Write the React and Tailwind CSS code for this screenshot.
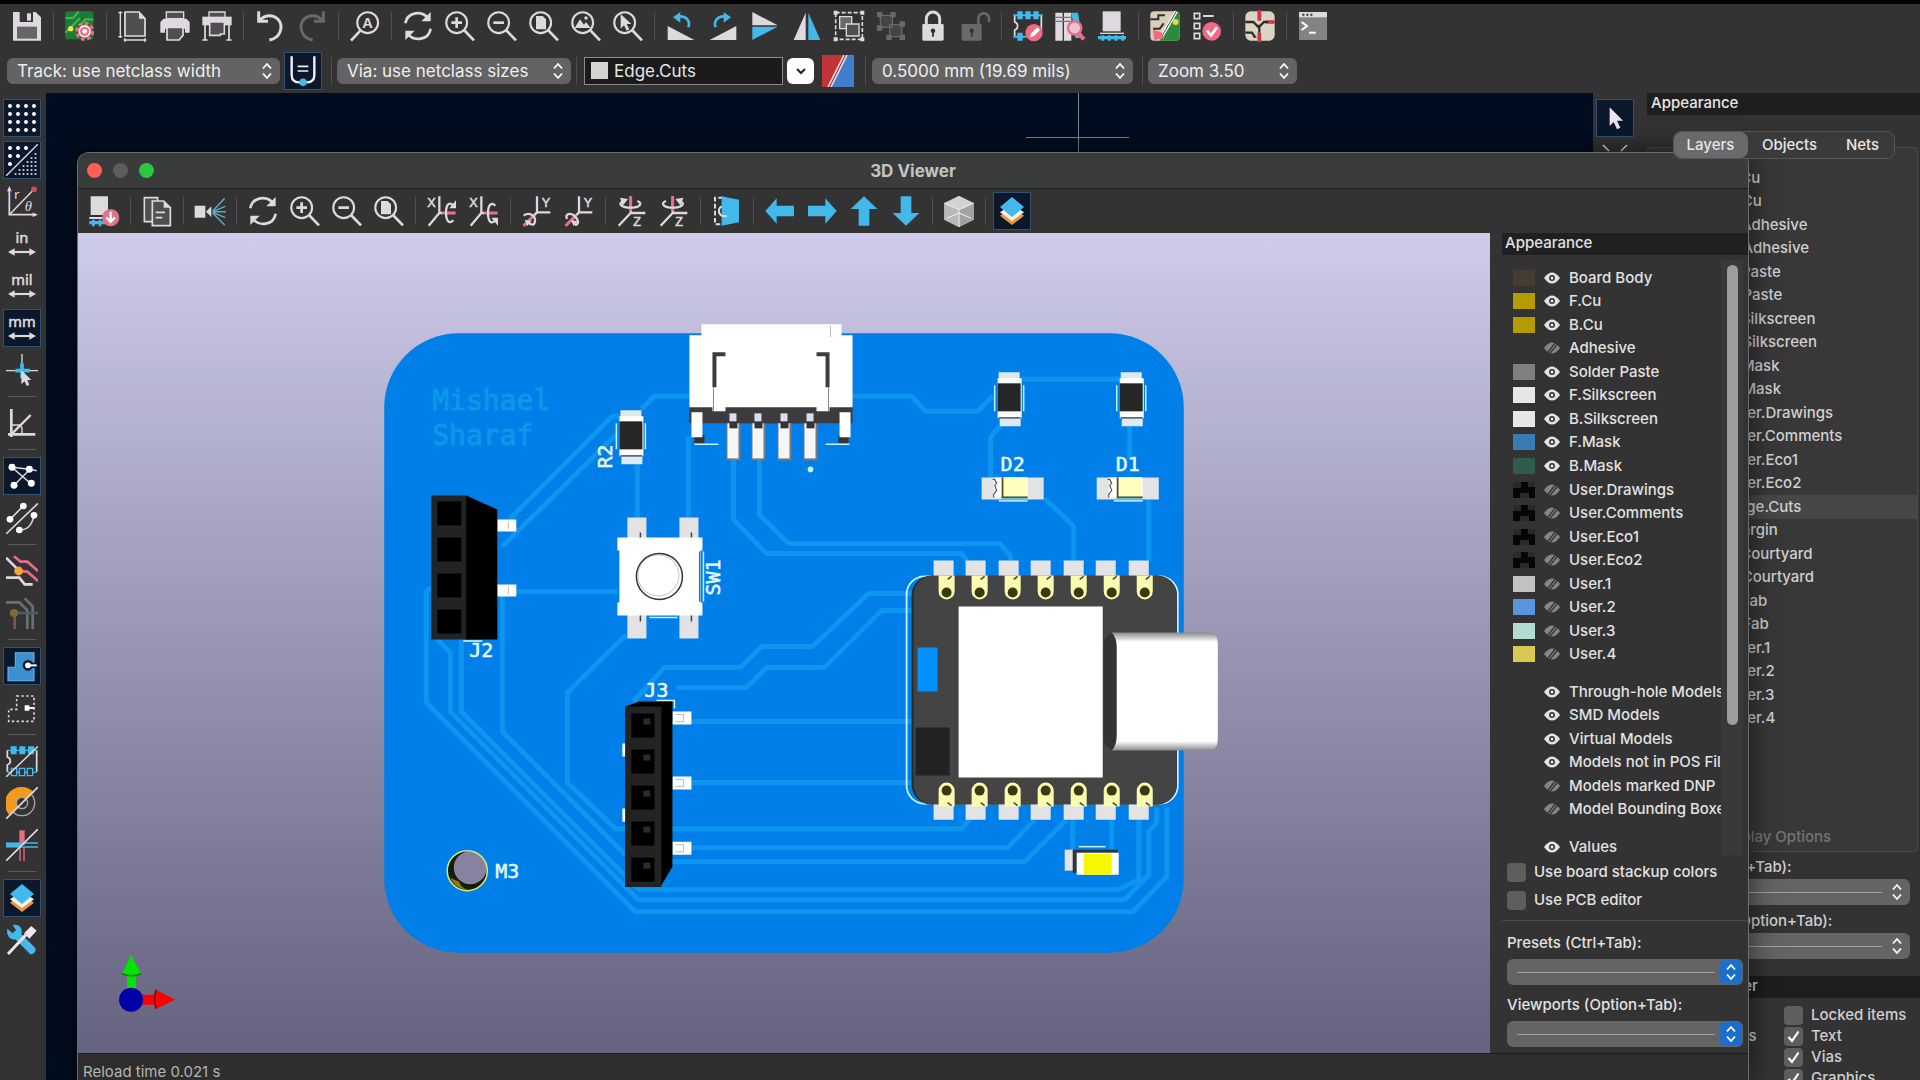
import React from 'react';
import clsx from 'clsx';

const L = '#ded9de';
const B = '#42b8eb';
const P = '#ee6a85';
const DIM = '#6b686b';

const glass = (
  <g fill="none" stroke={L} strokeWidth="1.6">
    <circle cx="9.5" cy="9.5" r="7.8" />
    <path d="M15 15l7.5 7.8" strokeWidth="2" />
  </g>
);

const gear = (cx, cy, fill) => (
  <g>
    <circle cx={cx} cy={cy} r="5" fill={fill} />
    <circle cx={cx} cy={cy} r="6" fill="none" stroke={fill} strokeWidth="2.4" strokeDasharray="2.7 2" />
    <circle cx={cx} cy={cy} r="4" fill="none" stroke="#fff" strokeWidth="1" />
    <circle cx={cx} cy={cy} r="1.8" fill="#fff" />
  </g>
);

const horizontalUnit = (label) => (
  <>
    <text x="12" y="11.5" textAnchor="middle" fontSize="11" fill={L} stroke={L} strokeWidth=".4" fontFamily="Noto Sans, sans-serif">{label}</text>
    <path d="M5 18h14" stroke={L} strokeWidth="1.6" />
    <path d="M1.5 18l5-2.800v5.600zM22.500 18l-5-2.800v5.600z" fill={L} />
  </>
);

const axisIcon = (axis, ccw) => {
  const [ox, oy] = { X: [10, 13.5], Y: [12, 13], Z: [11, 13.5] }[axis];
  const [lx, ly] = { X: [1, 9], Y: [15.5, 9], Z: [13, 23.5] }[axis];
  return (
    <>
      <path d={`M${ox} ${oy}V1M${ox} ${oy}H22M${ox} ${oy}L2 23`} stroke={L} strokeWidth="1.7" fill="none" />
      {axis === 'X' && (
        <>
          <path d="M12 13.500h10" stroke={P} strokeWidth="2" />
          <path d={ccw ? 'M20.500 8c-3-3.500-5.500 0-5.500 5.500s2 9 5 6' : 'M20.500 19c-3 3.500-5.500 0-5.500-5.500s2-9 5-6'} stroke={L} strokeWidth="1.700" fill="none" />
          <path d={ccw ? 'M17.500 17h5v6z' : 'M17.500 10h5V4z'} fill={L} />
        </>
      )}
      {axis === 'Y' && (
        <>
          <path d="M10 15l-8 8" stroke={P} strokeWidth="2.200" />
          <path d={ccw ? 'M3 18c-2-4 3-5 6-2s3 6 0 6.500' : 'M2 15.500c4-3 9 0 8.500 4s-3 3-5 1'} stroke={L} strokeWidth="1.700" fill="none" />
          <path d={ccw ? 'M6 19l5 .5-3 4z' : 'M3 18.500l5 1-3.500 4z'} fill={L} />
        </>
      )}
      {axis === 'Z' && (
        <>
          <path d="M11 1v11" stroke={P} strokeWidth="2.200" />
          <path d={ccw ? 'M6 4.500c-5 2-1 5 5 5s11-3 5-5' : 'M16 4.500c5 2 1 5-5 5s-11-3-5-5'} stroke={L} strokeWidth="1.700" fill="none" />
          <path d={ccw ? 'M13 3l6-1-2 6z' : 'M9 3L3 2l2 6z'} fill={L} />
        </>
      )}
      <text x={lx} y={ly} fontSize="9.5" fill={L} stroke={L} strokeWidth=".4" fontFamily="Liberation Sans, sans-serif">{axis}</text>
    </>
  );
};

const ICONS = {
  save: (
    <>
      <path d="M1.500 1.500h17l4 4v17.500h-21z" fill={L} />
      <path d="M6.500 1.500h10v7.500h-10z" fill="#343434" />
      <path d="M12 2.500h3v5.500h-3z" fill={L} />
      <path d="M4.500 12.500h15v9h-15z" fill="#68656a" />
    </>
  ),
  boardSetup: (
    <>
      <rect x="1" y="1" width="21" height="21" rx="2" fill="#1d7c33" />
      <path d="M1 6h6l4-5M12 12l4-5h6M1 17l6-6 5-5" stroke="#3fb357" strokeWidth="1.600" fill="none" />
      <circle cx="5" cy="14" r="2" fill="#f3e64a" />
      {gear(15.5, 16, P)}
    </>
  ),
  page: (
    <>
      <path d="M6 1.500h10.500l4.500 5v13H6z" fill="#504e50" stroke={L} strokeWidth="1.300" />
      <path d="M16.500 1.500v5H21z" fill={L} />
      <path d="M2.500 1v20M1 2h3M1 20h3M5 22.500h17M6 21v3M21 21v3" stroke={L} strokeWidth="1" fill="none" />
    </>
  ),
  print: (
    <>
      <path d="M5.500 1.500h13v5h-13z" fill="#504e50" stroke={L} strokeWidth="1" />
      <path d="M3.500 6.500h17l2.500 2.500v8h-3.500v-3h-15v3H1V9z" fill={L} />
      <path d="M6 13h12v6l-3 3.500H6z" fill="#504e50" stroke={L} strokeWidth="1.300" />
    </>
  ),
  plot: (
    <>
      <path d="M6 1.500h12v5H6z" fill="#504e50" stroke={L} strokeWidth="1" />
      <path d="M1 5h22v6.500H1z" fill={L} />
      <path d="M6.500 9h11v9h-3v1h-8z" fill="#504e50" stroke={L} strokeWidth="1.200" />
      <path d="M3 11v11.500M21 11v11.500M1 22.500h4M19 22.500h4" stroke={L} strokeWidth="1.300" />
    </>
  ),
  undo: (
    <g fill="none" stroke={L} strokeWidth="2.200">
      <path d="M3.500 1v7.500h7" />
      <path d="M4 8C8 3.500 14 3 18 7c4.500 5 2 14-6.500 15.500" />
    </g>
  ),
  redo: (
    <g fill="none" stroke={DIM} strokeWidth="2.200">
      <path d="M20.500 1v7.500h-7" />
      <path d="M20 8C16 3.500 10 3 6 7c-4.500 5-2 14 6.500 15.500" />
    </g>
  ),
  find: (
    <>
      <circle cx="14" cy="9.500" r="7.800" fill="none" stroke={L} strokeWidth="1.600" />
      <path d="M8.500 15.500L1.500 23" stroke={L} strokeWidth="2" />
      <text x="14" y="13.500" textAnchor="middle" fontSize="11" fontWeight="700" fill={L} fontFamily="Liberation Sans, sans-serif">A</text>
    </>
  ),
  refresh: (
    <g fill="none" stroke={L} strokeWidth="2">
      <path d="M2.500 10C4 1.500 15-.5 20.500 7" />
      <path d="M21.500 14C20 22.500 9 24.500 3.500 17" />
      <path d="M21.500 1.500v7h-7zM2.500 22.500v-7h7z" fill={L} stroke="none" />
    </g>
  ),
  zoomIn: <>{glass}<path d="M5.500 9.500h8M9.500 5.500v8" stroke={L} strokeWidth="2" /></>,
  zoomOut: <>{glass}<path d="M5.500 9.500h8" stroke={L} strokeWidth="2" /></>,
  zoomPage: <>{glass}<path d="M6 4.500h5l2.500 2.500v7.500H6z" fill={L} /></>,
  zoomObjects: <>{glass}<path d="M3.500 13.500l4-6.500 3 4 1.500-2 3.500 4.500z" fill={L} /><circle cx="12" cy="6" r="1.300" fill={L} /></>,
  zoomTool: <>{glass}<path d="M6.500 3v11l2.500-2.500 2 4 2-1-2-4h3.500z" fill={L} /></>,
  rotateCcw: (
    <>
      <path d="M2 12v10.500h20z" fill={L} />
      <path d="M17.500 13c2-5-2-9-8-8" fill="none" stroke={B} strokeWidth="2" />
      <path d="M6 5.500l5.500-4v8z" fill={B} />
    </>
  ),
  rotateCw: (
    <>
      <path d="M22 12v10.500H2z" fill={L} />
      <path d="M6.500 13c-2-5 2-9 8-8" fill="none" stroke={B} strokeWidth="2" />
      <path d="M18 5.500l-5.500-4v8z" fill={B} />
    </>
  ),
  flipV: <><path d="M2.500 1.500v10h19z" fill={L} /><path d="M2.500 22.500v-10h19z" fill={B} /></>,
  flipH: <><path d="M11 2v20.500H2z" fill={L} /><path d="M13 2v20.500h9z" fill={B} /></>,
  group: (
    <>
      <rect x="2" y="2" width="20" height="20" fill="none" stroke={L} strokeWidth="1.200" strokeDasharray="3 1.500" />
      <path d="M5 5h9v9H5z" fill="#6a676a" stroke={L} />
      <path d="M10 10.500h9.500v9H10z" fill="#504e50" stroke={L} />
      <path d="M.5.500h3v3h-3zM20.500.500h3v3h-3zM.5 20.500h3v3h-3zM20.500 20.500h3v3h-3z" fill={L} />
    </>
  ),
  ungroup: (
    <g stroke={DIM} fill="#444">
      <path d="M4 4h9v9H4zM11 11h9v9h-9z" />
      <path d="M2 2h3v3H2zM12 2h3v3h-3zM2 12h3v3H2zM19 9h3v3h-3zM9 19h3v3H9zM19 19h3v3h-3z" fill={DIM} />
    </g>
  ),
  lock: (
    <>
      <path d="M7 11V6.500a5 5 0 0 1 10 0V11" fill="none" stroke={L} strokeWidth="2.200" />
      <rect x="4" y="10.500" width="16" height="12.500" rx="1" fill={L} />
      <circle cx="12" cy="15.500" r="1.700" fill="#333" /><path d="M11.300 16h1.400v4h-1.400z" fill="#333" />
    </>
  ),
  unlock: (
    <>
      <path d="M14.500 11V6.500a4 4 0 0 1 8 0V9" fill="none" stroke={DIM} strokeWidth="2" />
      <rect x="2" y="10.500" width="15" height="12.500" rx="1" fill={DIM} />
      <circle cx="9.500" cy="15.500" r="1.600" fill="#333" /><path d="M9 16h1.200v4H9z" fill="#333" />
    </>
  ),
  footprintEditor: (
    <>
      <path d="M2 4v5c3 1 3 5 0 6v5M22 4v12" stroke={L} strokeWidth="1.300" fill="none" />
      <path d="M4 1h4v6H4zM10 1h4v6h-4zM16 1h4v6h-4zM4 17h4v6H4z" fill={B} />
      <path d="M1 4h22M1 20h10" stroke={B} strokeWidth="1.500" />
      <circle cx="16.500" cy="17" r="6.500" fill={P} />
      <path d="M13.500 20.500l1-3 4.500-4.500 2 2-4.500 4.500z" fill="#fff" />
    </>
  ),
  footprintBrowser: (
    <>
      <path d="M1 2h5.500v21H1zM7.500 2H13v21H7.500z" fill={L} />
      <path d="M1 5.500h12M1 8.500h12" stroke="#777" />
      <path d="M13 2h5l3 19h-5z" fill={B} />
      <circle cx="15.500" cy="13.500" r="5" fill="#e9c3cf" stroke={P} strokeWidth="1.800" />
      <path d="M18.500 17.500l4 4.500" stroke={P} strokeWidth="3" />
    </>
  ),
  viewer3d: (
    <>
      <path d="M5 1h13.500v15H5z" fill={L} />
      <path d="M3 17h18v1H3z" fill={L} />
      <path d="M1.500 19.500h21v2.500h-21z" fill={B} /><path d="M4 19h2v4H4zM9 19h2v4H9zM14 19h2v4h-2zM19 19h2v4h-2z" fill={B} />
    </>
  ),
  updatePcb: (
    <>
      <rect x="1" y="1" width="22" height="22" rx="3" fill="#d8cfb8" />
      <path d="M19 1h1.500q2.500 0 2.500 2.500v17q0 2.500-2.500 2.500H8z" fill="#2c8a3c" />
      <path d="M1 7h6V4h5M3 14h5l3-4" stroke="#333" strokeWidth="1.500" fill="none" />
      <path d="M20.500 1L9.500 20" stroke="#fff" strokeWidth="2.500" />
      <path d="M20.500 1L9.500 20" stroke="#333" strokeWidth=".7" />
      <path d="M3 15l6 1.500 3 4.500-8 1.500z" fill={P} />
      <circle cx="20" cy="9" r="2.200" fill="#e8d84a" />
    </>
  ),
  drc: (
    <>
      <path d="M2.500 2.500h4v4h-4zM2.500 10h4v4h-4zM2.500 17.500h4v4h-4z" fill="none" stroke={L} strokeWidth="1.300" />
      <path d="M9 4.500h8" stroke={L} strokeWidth="1.500" />
      <circle cx="15.500" cy="16" r="7" fill={P} />
      <path d="M12 15.500l3 3.500 4.500-6" stroke="#fff" strokeWidth="2" fill="none" />
    </>
  ),
  schematic: (
    <>
      <rect x="1" y="1" width="22" height="22" rx="4" fill="#dcd3c4" />
      <path d="M11.500 0v8M23 9h-6M11.500 24v-7" stroke="#c8384a" strokeWidth="2.800" />
      <path d="M1 9h6l4 4 4-4h3M11.500 17v-6M1 17h5l2 3h-1" stroke="#2c2c2c" strokeWidth="1.700" fill="none" />
    </>
  ),
  console: (
    <>
      <path d="M1.500 1.500h21v21h-21z" fill="#848284" />
      <path d="M1.500 1.500h21v4h-21z" fill={L} />
      <path d="M4 3.500h1.500M7 3.500h1.500M10 3.500h1.500" stroke="#333" strokeWidth="1.500" />
      <path d="M3.500 9l4 3-4 3M9 17h5" stroke="#fff" strokeWidth="1.500" fill="none" />
    </>
  ),
  trackWidth: (
    <>
      <path d="M3.500 1v14q0 5.500 5.500 5.500h6q5.500 0 5.500-5.500V1" fill="none" stroke="#f0f0f0" strokeWidth="1.800" />
      <path d="M8 8.500h8M8 12h8" stroke="#f0f0f0" strokeWidth="1.300" />
      <circle cx="12" cy="20.500" r="2.800" fill={B} />
    </>
  ),
  grid: (
    <g fill="#fff">
      {[3, 9, 15, 21].map((y) => [3, 9, 15, 21].map((x) => <circle key={`${x}-${y}`} cx={x} cy={y} r="1.500" />))}
    </g>
  ),
  gridOverride: (
    <>
      <g fill="#fff">
        <circle cx="3" cy="3" r="1.500" /><circle cx="9" cy="3" r="1.500" /><circle cx="15" cy="3" r="1.500" />
        <circle cx="3" cy="9" r="1.500" /><circle cx="9" cy="9" r="1.500" /><circle cx="3" cy="15" r="1.500" />
      </g>
      <path d="M0 24L24 0" stroke={L} strokeWidth="1" />
      <g stroke="#fff" strokeWidth="1.300" strokeDasharray="1.300 1.700">
        <path d="M6.500 22.500H24M9.500 19.500H24M12.500 16.500H24M15.500 13.500H24M18.500 10.500H24M21.500 7.500H24" />
      </g>
    </>
  ),
  polar: (
    <>
      <path d="M2.500 2v19.500H21" stroke={L} strokeWidth="1.300" fill="none" />
      <path d="M2.500 0L.8 4h3.400zM24 21.500l-4-1.700v3.400z" fill={L} />
      <path d="M2.500 21.500L20.500 3" stroke={L} strokeWidth="1.100" />
      <circle cx="21" cy="2.500" r="2.200" fill="#c94f62" />
      <text x="6" y="10" fontSize="10" fill={L} fontFamily="Noto Sans, sans-serif">r</text>
      <text x="14" y="19" fontSize="11" fontStyle="italic" fill={L} fontFamily="Liberation Serif, serif">θ</text>
    </>
  ),
  inches: horizontalUnit('in'),
  mils: horizontalUnit('mil'),
  millimeters: horizontalUnit('mm'),
  cursorShape: (
    <>
      <path d="M12 0v7M0 12.500h7M17 12.500h7" stroke={L} strokeWidth="1" />
      <path d="M12 7v11M7 12.500h11" stroke={B} strokeWidth="2.800" />
      <path d="M11.500 12v10.500l2.500-2 1.500 3.500 2-1-1.500-3.500h3z" fill={L} />
    </>
  ),
  angle45: (
    <g fill="none" stroke={L} strokeWidth="1.500">
      <path d="M4 1.500v21M1.500 20.500H22" strokeWidth="2" />
      <path d="M4 20.500L18.500 6" strokeWidth="1.800" /><path d="M4 13.500h6l2 2v5" strokeWidth="1" />
    </g>
  ),
  ratsnest: (
    <>
      <path d="M4.500 5.500L17.500 7l5.500 1M18 7L6 19M4.500 5.500L19 18" stroke={L} strokeWidth="1.100" />
      <g fill="#fff"><circle cx="4.500" cy="5.500" r="2.600" /><circle cx="17.500" cy="7" r="2.600" /><circle cx="6" cy="19" r="2.600" /><circle cx="19" cy="17.500" r="2.600" /></g>
    </>
  ),
  curvedRatsnest: (
    <>
      <path d="M0 24L24 1M3 13L13 3M10 21c8 0 10-6 11-11" stroke={L} strokeWidth="1.200" fill="none" />
      <g fill="#fff"><circle cx="3" cy="13" r="2.500" /><circle cx="13" cy="3" r="2.500" /><circle cx="10" cy="21" r="2.500" /><circle cx="21" cy="10" r="2.500" /></g>
    </>
  ),
  netHighlight: (
    <g fill="none" strokeWidth="2">
      <path d="M6 1l5 4h5l8 7M10 12l6 .5 8 7" stroke={P} />
      <path d="M0 2l9 9M0 17h10l4 5h6" stroke={L} />
      <circle cx="9.500" cy="12" r="3.300" fill="#f3a63c" />
    </g>
  ),
  netDim: (
    <g fill="none" strokeWidth="2" opacity=".6">
      <path d="M0 4h10l6 6v14M14 1l6 6v17" stroke="#9a989a" />
      <path d="M6 12h18" stroke="#4a7f98" />
      <path d="M6.500 12v12" stroke="#b06a4c" />
      <circle cx="6" cy="12" r="3" fill="#b78a3c" />
    </g>
  ),
  zoneFilled: (
    <>
      <path d="M7 2h14v21H1.500V13H7z" fill="#3d8fd0" stroke="#6cb4e6" strokeWidth=".8" />
      <circle cx="16.500" cy="11.500" r="4" fill="#0d1a30" /><path d="M16 10.500h8v2h-8z" fill="#0d1a30" stroke="#0d1a30" strokeWidth="2" />
      <circle cx="16.500" cy="11.500" r="2.200" fill="#fff" /><path d="M16 10.800h7v1.500h-7z" fill="#fff" />
    </>
  ),
  zoneOutline: (
    <>
      <path d="M8 3h13v19H2v-9h6z" fill="none" stroke={L} strokeWidth="1.200" strokeDasharray="1.800 1.800" />
      <path d="M14 10h3.500v1.300h4v1.500h-4V14H14z" fill="#fff" />
    </>
  ),
  padSketch: (
    <>
      <path d="M1 4v5c3 1 3 5 0 6v5M23 4v16" stroke={L} strokeWidth="1.300" fill="none" />
      <path d="M3.500 1h4.500v6H3.500zM10 1h4.500v6H10zM16.500 1H21v6h-4.500z" fill={B} />
      <path d="M4 17.500h4v5.500H4zM10 17.500h4v5.500h-4zM16 17.500h4v5.500h-4zM1 4h22M1 20.500h3M8 20.500h2M14 20.500h2M20 20.500h3" fill="none" stroke={B} />
      <path d="M0 24L24 1" stroke={L} strokeWidth="1.100" />
    </>
  ),
  viaSketch: (
    <>
      <circle cx="12" cy="12" r="9.500" fill="none" stroke="#a9a5a9" strokeWidth="1" />
      <path d="M2.500 21A10 10 0 0 1 21 4z" fill="#f29a1f" />
      <circle cx="12" cy="12" r="4.200" fill="#343434" stroke="#a9a5a9" />
      <path d="M0 24L24 0" stroke={L} strokeWidth="1.200" />
    </>
  ),
  trackSketch: (
    <>
      <path d="M12 1v11" stroke={P} strokeWidth="4" />
      <path d="M0 12h12" stroke={B} strokeWidth="3.800" />
      <path d="M12 10.500h12M12 13.500h12" stroke={B} strokeWidth="1" />
      <path d="M10.500 14v10M13.500 14v10" stroke={P} strokeWidth="1" />
      <path d="M0 24L24 0" stroke={L} strokeWidth="1.200" />
    </>
  ),
  layers: (
    <>
      <path d="M12 9.500l9 6L12 22.500l-9-7z" fill="#e89a3a" />
      <path d="M12 7l9 6L12 19.500 3 13z" fill="#f4efe8" />
      <path d="M12 1.500l9 7.500-9 7.500L3 9z" fill={B} />
    </>
  ),
  tools: (
    <>
      <path d="M1 3.500l4 3.500 2.500-2.500L5 1c4-1.500 8 2 6.500 6.500L22 18c1 3-2 5.500-4 4.500L7 11.500C3 12.500 0 8 1 3.500z" fill={B} />
      <path d="M1.500 22.500L15 8" stroke="#f0e6ee" strokeWidth="2.200" />
      <path d="M13.500 7l5.500-5.500 4 3.500-5.500 6z" fill="#f0e6ee" />
    </>
  ),
  arrowCursor: <path d="M8 4v14l3-3 2.500 5.500 2.500-1.200-2.500-5.300h4.500z" fill="#ece4ee" />,
  export3d: (
    <>
      <path d="M2 1h13v14H2z" fill={L} /><path d="M1 16.500h16v1.500H1z" fill={L} />
      <path d="M1 19.500h16V22H1z" fill={B} /><path d="M3 18.500h2v5H3zM8 18.500h2v5H8z" fill={B} />
      <circle cx="17" cy="17" r="6.500" fill="#e0748a" />
      <path d="M17 12.500v7M13.800 16.800l3.200 3.400 3.200-3.400" stroke="#fff" strokeWidth="1.700" fill="none" />
    </>
  ),
  copy: (
    <>
      <path d="M2.500 2h10v18h-10z" fill="#504e50" stroke={L} strokeWidth="1.200" />
      <path d="M8.500 4.500h8.500l5 5V23H8.500z" fill="#504e50" stroke={L} strokeWidth="1.300" />
      <path d="M17 4.500v5h5z" fill={L} /><path d="M11 13h7M11 17h5" stroke={L} strokeWidth="1.200" />
    </>
  ),
  raytrace: (
    <>
      <path d="M.5 8h8v9h-8zM9 12.500l4-4v8z" fill={L} />
      <path d="M14 12l9-9.500M14 12.500l9.500-4M14 12.500h10M14 13l9.500 4M14 13.500l9 9" stroke="#5fa9c6" strokeWidth="1.100" />
    </>
  ),
  xCw: axisIcon('X', false),
  xCcw: axisIcon('X', true),
  yCw: axisIcon('Y', false),
  yCcw: axisIcon('Y', true),
  zCw: axisIcon('Z', false),
  zCcw: axisIcon('Z', true),
  flipBoard: (
    <>
      <path d="M9 2H3v20h6" stroke={L} strokeWidth="1.500" strokeDasharray="3.500 1.800" fill="none" />
      <path d="M8 1l13 2.500v17L8 23z" fill={B} />
      <path d="M8 8.500a4 4 0 0 0 0 7l4 .5" stroke={L} strokeWidth="1.500" fill="none" />
    </>
  ),
  left: <path d="M1 12L9.500 2.500V8H22.500v8H9.500v5.500z" fill={B} />,
  right: <path d="M23 12l-8.500-9.500V8H1.500v8h13v5.500z" fill={B} />,
  up: <path d="M12 1L2 10.500h6V23h8V10.500h6z" fill={B} />,
  down: <path d="M12 23L2 13.500h6V1h8v12.500h6z" fill={B} />,
  cube: (
    <>
      <path d="M12 .5l11 5.500v12.500L12 24 1 18.500V6z" fill="#d2d2d2" />
      <path d="M12 11v13l11-5.500V6z" fill="#a2a2a2" /><path d="M12 11v13L1 18.500V6z" fill="#b8b8b8" />
      <path d="M1 6l11 5 11-5M12 11v13M3 17.500l9-4 9 4" fill="none" stroke="#ececec" strokeWidth=".8" />
    </>
  ),
};

const MAIN_TOOLS = [
  'save', '|', 'boardSetup', '|', 'page', 'print', 'plot', '|', 'undo', 'redo', '|', 'find', '|',
  'refresh', 'zoomIn', 'zoomOut', 'zoomPage', 'zoomObjects', 'zoomTool', '|',
  'rotateCcw', 'rotateCw', 'flipV', 'flipH', 'group', 'ungroup', 'lock', 'unlock', '|',
  'footprintEditor', 'footprintBrowser', 'viewer3d', '|', 'updatePcb', 'drc', '|', 'schematic', '|', 'console',
];

const SIDE_TOOLS = [
  'grid', 'gridOverride', 'polar', 'inches', 'mils', 'millimeters', 'cursorShape', '|', 'angle45', '|',
  'ratsnest', 'curvedRatsnest', '|', 'netHighlight', 'netDim', '|', 'zoneFilled', 'zoneOutline', '|',
  'padSketch', 'viaSketch', 'trackSketch', '|', 'layers', 'tools',
];

const VIEWER_TOOLS = [
  'export3d', '|', 'copy', '|', 'raytrace', '|', 'refresh', 'zoomIn', 'zoomOut', 'zoomPage', '|',
  'xCw', 'xCcw', '|', 'yCw', 'yCcw', '|', 'zCw', 'zCcw', '|', 'flipBoard', '|',
  'left', 'right', 'up', 'down', '|', 'cube', '|', 'layers',
];

const BOARD_LAYERS = [
  'F.Cu', 'B.Cu', 'F.Adhesive', 'B.Adhesive', 'F.Paste', 'B.Paste', 'F.Silkscreen', 'B.Silkscreen',
  'F.Mask', 'B.Mask', 'User.Drawings', 'User.Comments', 'User.Eco1', 'User.Eco2', 'Edge.Cuts', 'Margin',
  'F.Courtyard', 'B.Courtyard', 'F.Fab', 'B.Fab', 'User.1', 'User.2', 'User.3', 'User.4',
];

const VIEWER_LAYERS = [
  { name: 'Board Body', swatch: 'bg-[#453d32]', on: true },
  { name: 'F.Cu', swatch: 'bg-[#b39b00]', on: true },
  { name: 'B.Cu', swatch: 'bg-[#b39b00]', on: true },
  { name: 'Adhesive', on: false },
  { name: 'Solder Paste', swatch: 'bg-[#808080]', on: true },
  { name: 'F.Silkscreen', swatch: 'bg-[#e6e6e6]', on: true },
  { name: 'B.Silkscreen', swatch: 'bg-[#e6e6e6]', on: true },
  { name: 'F.Mask', swatch: 'bg-[#3a7ab5]', on: true },
  { name: 'B.Mask', swatch: 'bg-[#2f5c4b]', on: true },
  { name: 'User.Drawings', checker: true, on: false },
  { name: 'User.Comments', checker: true, on: false },
  { name: 'User.Eco1', checker: true, on: false },
  { name: 'User.Eco2', checker: true, on: false },
  { name: 'User.1', swatch: 'bg-[#c2c2c2]', on: false },
  { name: 'User.2', swatch: 'bg-[#5994dc]', on: false },
  { name: 'User.3', swatch: 'bg-[#b4dbd2]', on: false },
  { name: 'User.4', swatch: 'bg-[#d8c852]', on: false },
];

const MODEL_LAYERS = [
  { name: 'Through-hole Models', on: true },
  { name: 'SMD Models', on: true },
  { name: 'Virtual Models', on: true },
  { name: 'Models not in POS File', on: true },
  { name: 'Models marked DNP', on: false },
  { name: 'Model Bounding Boxes', on: false },
];

function Separator({ vertical }) {
  return (
    <div className={clsx('flex shrink-0 items-center justify-center', vertical ? 'h-[11px] w-full' : 'h-8 w-[11px]')}>
      <div className={vertical ? 'h-px w-7 bg-[#5a5a5a]' : 'h-7 w-px bg-[#505050]'} />
    </div>
  );
}

function ToolButton({ name, active, vertical }) {
  return (
    <button
      type="button"
      aria-label={name}
      className={clsx(
        'flex size-[38px] shrink-0 items-center justify-center border',
        vertical ? 'my-0.5' : 'mx-0.5',
        active ? 'border-[#34526f] bg-[#0b182c]' : 'border-transparent'
      )}
    >
      <svg viewBox="0 0 24 24" className="size-8">{ICONS[name]}</svg>
    </button>
  );
}

function Tools({ items, active = [], vertical }) {
  return items.map((name, i) =>
    name === '|' ? (
      <Separator key={i} vertical={vertical} />
    ) : (
      <ToolButton key={i} name={name} vertical={vertical} active={active.includes(name)} />
    )
  );
}

function Chevrons({ className }) {
  return (
    <svg viewBox="0 0 10 18" className={clsx('pointer-events-none h-[18px] w-[10px]', className)} fill="none" stroke="#fff" strokeWidth="1.800">
      <path d="M1 6.500L5 2l4 4.500M1 11.500L5 16l4-4.500" />
    </svg>
  );
}

function ToolbarSelect({ label, width }) {
  return (
    <div className={clsx('relative flex shrink-0 items-center', width)}>
      <select aria-label={label} className="h-[26px] w-full appearance-none rounded-md bg-[#636363] pl-2.5 text-[17px] leading-6 text-[#efefef]">
        <option>{label}</option>
      </select>
      <Chevrons className="absolute right-2" />
    </div>
  );
}

function PresetSelect({ id, blue }) {
  return (
    <div className="relative flex items-center">
      <select id={id} className="h-[26px] w-full appearance-none rounded-md bg-[#646464]">
        <option></option>
      </select>
      <div className="pointer-events-none absolute right-7 left-2.5 h-px bg-[#a0a0a0]" />
      {blue ? (
        <span className="pointer-events-none absolute right-px flex h-6 w-[22px] items-center justify-center rounded-[5px] bg-[#1a6fce]">
          <Chevrons />
        </span>
      ) : (
        <Chevrons className="absolute right-2" />
      )}
    </div>
  );
}

function CheckBox({ label, checked }) {
  return (
    <label className="flex items-center gap-2">
      <span className="relative flex size-[19px] shrink-0 items-center justify-center">
        <input type="checkbox" defaultChecked={checked} className="size-[19px] appearance-none rounded bg-[#5e5e5e]" />
        {checked && (
          <svg viewBox="0 0 19 19" className="pointer-events-none absolute size-[19px]" fill="none" stroke="#fff" strokeWidth="2.200">
            <path d="M4.500 10l3.500 4 6.500-9.500" />
          </svg>
        )}
      </span>
      <span className="whitespace-nowrap">{label}</span>
    </label>
  );
}

function Eye({ on }) {
  return (
    <svg viewBox="0 0 18 14" className="h-[14px] w-[18px]">
      <path d="M1 7q8-11 16 0q-8 11-16 0z" fill={on ? '#e4e4e4' : '#858585'} />
      <circle cx="9" cy="7" r="3" fill={on ? '#333' : '#858585'} />
      <circle cx="9" cy="7" r="1.500" fill={on ? '#e4e4e4' : '#858585'} />
      {!on && <path d="M3.500 13L13 1M6 13.500L15.500 2" stroke="#333" strokeWidth="1.300" />}
    </svg>
  );
}

function Checker() {
  return (
    <svg viewBox="0 0 22 16" className="h-4 w-[22px]">
      <path d="M0 0h22v16H0z" fill="#2a2a2a" />
      <path d="M8 0h7v5H8zM0 6h8v5H0zM15 5h7v6h-7zM0 11h7v5H0zM8 5h7v6H8zM16 11h6v5h-6z" fill="#060606" />
    </svg>
  );
}

function LayerRow({ layer }) {
  return (
    <li className="flex items-center">
      <span className="flex w-[22px] shrink-0">
        {layer.checker ? <Checker /> : <span className={clsx('h-4 w-[22px]', layer.swatch)} />}
      </span>
      <button type="button" aria-label={`Toggle ${layer.name}`} className="mr-2 ml-2 shrink-0">
        <Eye on={layer.on} />
      </button>
      <span className="whitespace-nowrap">{layer.name}</span>
    </li>
  );
}

const TRACES = [
  'M690 397H655L642 410', 'M853 397H912L926 412H978L993 397', 'M1022 380H1120', 'M1001 426L991 438V478',
  'M1130 426V460', 'M1045 499L1074 527V562', 'M1149 499V562', 'M734 460V520L767 554H962L968 562',
  'M760 460V515L789 544H1000L1011 557V562', 'M620 417H613L510 520', 'M617 435L503 547', 'M638 465V518',
  'M689 437V518', 'M517 592H618', 'M432 588L427 592V703L636 912H1133L1167 877V808',
  'M438 640L451 653V712L639 900H1125L1149 875V832L1157 823V808', 'M462 640V712L640 890H1118L1139 880V820',
  'M503 592V732L626 855', 'M627 635L568 693V783L616 829H962L972 818', 'M690 848H1008L1035 820',
  'M670 862H1025L1067 820', 'M634 702L665 668H741L762 647H813L869 594H913',
  'M677 688H747L767 668H825L882 611H913', 'M692 722H913', 'M692 783H913', 'M1073 820V850', 'M1112 820V850',
];

const PAD_X = [934, 966, 999, 1031, 1064, 1096, 1129];
const HOLE_X = [947, 980, 1013, 1046, 1079, 1112, 1145];

function Resistor({ x, y }) {
  return (
    <g transform={`translate(${x} ${y})`}>
      <path d="M0 0h22v54H0z" fill="#007fe8" />
      <path d="M0 0h21v8H0zM1 46h21v8H1z" fill="#dfe9f0" />
      <path d="M-1 6h24v40H-1z" fill="#fff" />
      <path d="M-1 11h23v28H-1z" fill="#262626" />
      <path d="M0 45.500h22" stroke="#333" strokeWidth="1.200" />
      <path d="M-4 13v26M25 13v26" stroke="#c4f2ff" strokeWidth="1.500" />
    </g>
  );
}

function Led({ x, y }) {
  return (
    <g transform={`translate(${x} ${y})`}>
      <path d="M0 0h62v22H0z" fill="#e3e3e6" />
      <path d="M12 0h34v20H12z" fill="#fff" />
      <path d="M11 2h2l2 4-2 2 2 5-3 4v3" fill="none" stroke="#555" strokeWidth="1.200" />
      <path d="M20 0h2v20h-2z" fill="#5a4a1c" />
      <path d="M22 0h23v19H22z" fill="#ffffc0" />
      <path d="M20 19h26v2H20z" fill="#1d6a5a" />
      <path d="M17 23.500h29" stroke="#c4f2ff" strokeWidth="1.500" />
    </g>
  );
}

function SilkText({ x, y, rotate, children }) {
  return (
    <text
      x={x}
      y={y}
      fontSize="20"
      textAnchor="middle"
      fill="#e6faff"
      stroke="#e6faff"
      strokeWidth=".5"
      transform={rotate ? `rotate(-90 ${x} ${y})` : undefined}
    >
      {children}
    </text>
  );
}

function Board() {
  return (
    <svg viewBox="79 234 1411 819" className="h-full w-full" fontFamily="DejaVu Sans Mono, monospace">
      <defs>
        <linearGradient id="usb" x1="0" y1="0" x2="0" y2="1">
          <stop offset="0" stopColor="#8a8a8a" />
          <stop offset=".08" stopColor="#fff" />
          <stop offset=".92" stopColor="#fff" />
          <stop offset="1" stopColor="#8a8a8a" />
        </linearGradient>
      </defs>
      <rect x="385" y="334" width="799" height="619" rx="74" fill="#007fe8" />
      <g fill="none" stroke="#0c96ef" strokeWidth="5" strokeLinejoin="round">
        {TRACES.map((d) => <path key={d} d={d} />)}
      </g>
      <g fontSize="28" fill="#0b97ea" stroke="#0b97ea" strokeWidth="1">
        <text x="433" y="411">Mishael</text>
        <text x="433" y="446">Sharaf</text>
      </g>

      {/* mounting hole */}
      <circle cx="468" cy="871" r="20" fill="#1a1a08" />
      <path d="M451 878q5 12 19 12q-8-1-10-8z" fill="#8a7a10" />
      <circle cx="471" cy="868" r="16.500" fill="#86829f" />
      <circle cx="468" cy="871" r="20" fill="none" stroke="#d6ee7c" strokeWidth="1.500" />

      {/* JST connector */}
      <path d="M690 406h163v18H690z" fill="#3c3c3e" />
      <path d="M702 325h140v11h11v72h-23v4H713v-4h-23v-72h12z" fill="#fff" />
      <path d="M713 353h13v4h-9v31h-4zM830 353h-13v4h9v31h4z" fill="#3c3c3e" />
      <path d="M714 388v24M829 388v24" stroke="#888" />
      <path d="M831 326v12" stroke="#bbb" />
      <path d="M726 408h91v16h-91z" fill="#3c3c3e" />
      <path d="M695 436h10v8h-10zM839 436h10v8h-10z" fill="#333" />
      <path d="M692 413h11v25h-11zM840 413h11v25h-11z" fill="#fff" />
      <path d="M695 445h24M826 445h24" stroke="#c4f2ff" strokeWidth="1.500" />
      {[734, 759, 785, 811].map((x) => (
        <g key={x}>
          <path d={`M${x - 7} 424h14v37h-14z`} fill="#77797c" />
          <path d={`M${x - 6} 424h11v35h-11z`} fill="#f6f6f8" />
          <path d={`M${x - 4} 422h8v7h-8z`} fill="#333" />
          <path d={`M${x - 4} 414h7v8h-7z`} fill="#dcdcf2" />
        </g>
      ))}
      <circle cx="811" cy="470" r="2.800" fill="#c4f2ff" />

      <Resistor x={621} y={411} />
      <Resistor x={999} y={373} />
      <Resistor x={1121} y={373} />
      <Led x={982} y={478} />
      <Led x={1097} y={478} />

      {/* J2 header */}
      <path d="M498 520h19v12h-19zM498 585h19v12h-19z" fill="#fff" />
      <path d="M509 522v8M509 587v8" stroke="#c9b8b8" />
      <path d="M432 496h36v144h-36z" fill="#232323" />
      <path d="M467 496l31 14v130h-31z" />
      {[502, 538, 574, 610].map((y) => <path key={y} d={`M438 ${y}h24v24h-24z`} />)}
      <path d="M464 641.500h19" stroke="#dff7ff" strokeWidth="1.500" />

      {/* J3 header */}
      <path d="M673 712h19v13h-19zM673 777h19v13h-19zM673 842h19v13h-19zM623 744h4v13h-4zM623 809h4v13h-4z" fill="#fff" />
      <path d="M676 715h8v7h-8M676 780h8v7h-8M676 845h8v7h-8" fill="none" stroke="#c9b8b8" />
      <path d="M657 701h18v8" stroke="#dff7ff" strokeWidth="1.500" fill="none" />
      <path d="M626 707l14-5h33v165l-12 20h-35z" />
      <path d="M626 707h36v180h-36z" fill="#232323" />
      {[714, 750, 786, 822, 858].map((y) => (
        <g key={y}>
          <path d={`M632 ${y}h23v24h-23z`} />
          <path d={`M644 ${y + 5}h7v6h-7z`} fill="#2c2c2c" />
        </g>
      ))}

      {/* push button */}
      <path d="M628 518h19v22h-19zM680 518h19v22h-19zM628 614h19v25h-19zM680 614h19v25h-19z" fill="#e3e3e6" />
      <path d="M618 538h85v13h-2v52h2v13h-85v-13h2v-52h-2z" fill="#fff" />
      <path d="M641 533v5M692 533v5M641 616v6M692 616v6" stroke="#444" strokeWidth="1.500" />
      <path d="M700 552v50" stroke="#555" />
      <path d="M704 552v50M650 618h28" stroke="#c4f2ff" strokeWidth="1.500" />
      <circle cx="660" cy="577" r="23" fill="#fff" stroke="#333" strokeWidth="1.500" />
      <circle cx="659" cy="576" r="20.500" fill="none" stroke="#aaa" strokeWidth=".7" />

      {/* MCU module */}
      <rect x="907" y="577" width="271" height="227" rx="18" fill="none" stroke="#c4f2ff" strokeWidth="1.800" />
      <rect x="912" y="576" width="265" height="229" rx="20" fill="#2b2b2b" />
      <rect x="914" y="576" width="263" height="229" rx="20" fill="#444" />
      <g fill="#e3e3e6">
        {PAD_X.map((x) => <path key={x} d={`M${x} 561h20v15h-20zM${x} 805h20v15h-20z`} />)}
      </g>
      {HOLE_X.map((x) => (
        <g key={x}>
          <path d={`M${x - 8} 576h16v16a8 8 0 0 1-16 0zM${x - 8} 807h16v-16a8 8 0 0 0-16 0z`} fill="#fbfbb0" />
          <circle cx={x} cy="593" r="5" fill="#3a3a10" />
          <circle cx={x} cy="791" r="5" fill="#3a3a10" />
          <path d={`M${x + 1} 580l4-3M${x + 1} 803l4 3`} stroke="#444" strokeWidth="1.500" />
        </g>
      ))}
      <path d="M959 607h144v171H959z" fill="#fff" />
      <path d="M918 648h20v44h-20z" fill="#0090ff" />
      <path d="M916 728h34v48h-34z" fill="#222" />
      <rect x="1104" y="633" width="30" height="118" rx="12" fill="#333" />
      <path d="M1112 633h97q9 0 9 12v94q0 12-9 12h-97q5-5 5-15v-88q0-10-5-15z" fill="url(#usb)" />

      {/* LED by the module */}
      <path d="M1065 850h9v21h-9z" fill="#e3e3e6" />
      <path d="M1073 850h45v3h-41v20h-4z" fill="#333" />
      <path d="M1077 853h42v22h-42z" fill="#fff" />
      <path d="M1084 854h28v21h-28z" fill="#f7f700" />
      <path d="M1079 847h27" stroke="#c4f2ff" strokeWidth="1.500" />

      <SilkText x={613} y={457} rotate>R2</SilkText>
      <SilkText x={721} y={578} rotate>SW1</SilkText>
      <SilkText x={482} y={658}>J2</SilkText>
      <SilkText x={657} y={697}>J3</SilkText>
      <SilkText x={508} y={878}>M3</SilkText>
      <SilkText x={1013} y={472}>D2</SilkText>
      <SilkText x={1128} y={472}>D1</SilkText>

      {/* axes */}
      <path d="M128 973h9v16h-9zM132 955l10 19q-10 4-19 0z" fill="#00e400" />
      <path d="M123 974q10 4 19 0" stroke="#0a7a0a" strokeWidth="1.500" fill="none" />
      <path d="M142 995h16v10h-16zM176 1000l-19 9q-3-9 0-19z" fill="#f00" />
      <path d="M157 990q-3 9 0 19" stroke="#7a0a0a" strokeWidth="1.500" fill="none" />
      <circle cx="132" cy="1000" r="12" fill="#0000a8" />
    </svg>
  );
}

function ViewerPanel() {
  return (
    <aside className="flex w-[246px] shrink-0 flex-col text-[15px] leading-5 font-medium text-[#e2e2e2]">
      <h2 className="h-[22px] bg-[#202020] pl-[3px]">Appearance</h2>
      <div className="mt-[5px] flex h-[595px] overflow-hidden">
        <div className="w-[219px] overflow-hidden pt-1.5 pl-[11px]">
          <ul className="grid h-[400px] auto-rows-fr">
            {VIEWER_LAYERS.map((layer) => <LayerRow key={layer.name} layer={layer} />)}
          </ul>
          <ul className="mt-3.5 grid h-[141px] auto-rows-fr">
            {MODEL_LAYERS.map((layer) => <LayerRow key={layer.name} layer={layer} />)}
          </ul>
          <ul className="mt-3.5 grid h-6 auto-rows-fr">
            <LayerRow layer={{ name: 'Values', on: true }} />
          </ul>
        </div>
        <div className="flex w-[22px] justify-center bg-[#393939] pt-[5px]">
          <div className="h-[460px] w-[11px] rounded-full bg-[#9d9d9d]" />
        </div>
      </div>
      <div className="flex flex-col gap-2 px-[5px] pt-[7px]">
        <CheckBox label="Use board stackup colors" />
        <CheckBox label="Use PCB editor" />
      </div>
      <div className="mt-2.5 border-t border-[#4a4a4a]" />
      <div className="flex flex-col px-[5px] pt-3">
        <label htmlFor="viewer-presets" className="mb-1.5">Presets (Ctrl+Tab):</label>
        <PresetSelect id="viewer-presets" blue />
        <label htmlFor="viewer-viewports" className="mt-2.5 mb-1.5">Viewports (Option+Tab):</label>
        <PresetSelect id="viewer-viewports" blue />
      </div>
    </aside>
  );
}

function ViewerWindow() {
  return (
    <section className="absolute top-[148px] right-[171px] bottom-0 left-[77px] flex flex-col overflow-hidden rounded-t-xl border border-b-0 border-[#6a6c6e] bg-[#333333] shadow-[0_0_30px_rgba(0,0,0,0.6)]">
      <header className="flex h-9 shrink-0 items-center border-b border-[#1c1e1e] bg-[#393c3b]">
        <div className="flex w-40 gap-[11px] pl-[9px]">
          <span className="size-[15px] rounded-full bg-[#ff5f57]" />
          <span className="size-[15px] rounded-full bg-[#5c5e5d]" />
          <span className="size-[15px] rounded-full bg-[#2ac840]" />
        </div>
        <h1 className="flex-1 pr-40 text-center text-[17px] leading-6 font-bold text-[#c2c4c3]">3D Viewer</h1>
      </header>
      <div className="flex h-11 shrink-0 items-center pl-[5px]">
        <Tools items={VIEWER_TOOLS} active={['layers']} />
      </div>
      <div className="flex min-h-0 flex-1">
        <div className="mr-3 min-w-0 flex-1 bg-linear-to-b from-[#cecbeb] to-[#65637f]">
          <Board />
        </div>
        <ViewerPanel />
      </div>
      <footer className="flex h-[27px] shrink-0 items-end border-t border-[#1c1c1c] bg-[#2e2e2e] pl-[5px] text-[15px] leading-4 text-[#b4b4b4]">
        Reload time 0.021 s
      </footer>
    </section>
  );
}

function EditorPanel() {
  return (
    <aside className="flex w-[273px] shrink-0 flex-col overflow-hidden text-[15px] leading-5 font-medium text-[#d0d0d0]">
      <h2 className="h-[22px] shrink-0 bg-[#1e1e1e] pl-1 text-[#e6e6e6]">Appearance</h2>
      <div className="relative z-10 mt-4 flex h-7 shrink-0 self-center rounded-lg border border-[#555] bg-[#3a3a3a] text-[#e6e6e6]">
        <button type="button" className="w-[74px] rounded-lg bg-[#6a6a6a]">Layers</button>
        <button type="button" className="w-[84px]">Objects</button>
        <button type="button" className="w-[62px]">Nets</button>
      </div>
      <div className="-mt-3 mr-0.5 flex h-[705px] shrink-0 flex-col justify-between rounded border border-[#4a4a4a] bg-[#383838] pt-[18px] pb-1">
        <ul className="grid h-[564px] auto-rows-fr">
          {BOARD_LAYERS.map((name) => (
            <li key={name} className={clsx('flex items-center pl-20', name === 'Edge.Cuts' && 'bg-[#474747]')}>{name}</li>
          ))}
        </ul>
        <p className="pl-[27px] text-[#747474]">Layer Display Options</p>
      </div>
      <div className="flex shrink-0 flex-col px-2.5 pt-[5px]">
        <label htmlFor="editor-presets" className="mb-0.5">Presets (Ctrl+Tab):</label>
        <PresetSelect id="editor-presets" />
        <label htmlFor="editor-viewports" className="mt-1.5 mb-0.5">Viewports (Option+Tab):</label>
        <PresetSelect id="editor-viewports" />
      </div>
      <h2 className="mt-[17px] h-[22px] shrink-0 bg-[#1e1e1e] pl-1">Selection Filter</h2>
      <div className="grid shrink-0 grid-cols-[127px_auto] gap-y-px pt-[7px] pl-2.5">
        <CheckBox label="All items" />
        <CheckBox label="Locked items" />
        <CheckBox label="Footprints" checked />
        <CheckBox label="Text" checked />
        <CheckBox label="Tracks" checked />
        <CheckBox label="Vias" checked />
        <CheckBox label="Pads" checked />
        <CheckBox label="Graphics" checked />
      </div>
    </aside>
  );
}

export default function App() {
  return (
    <div className="relative flex h-screen flex-col overflow-hidden border-t-4 border-black bg-[#333333] font-['Inter','Liberation_Sans',sans-serif] text-[#e6e6e6]">
      <nav className="flex h-11 shrink-0 items-center pl-[6px]">
        <Tools items={MAIN_TOOLS} />
      </nav>
      <nav className="flex h-[45px] shrink-0 items-center pl-[7px]">
        <ToolbarSelect label="Track: use netclass width" width="w-[273px]" />
        <div className="mx-0.5 flex"><ToolButton name="trackWidth" active /></div>
        <Separator />
        <ToolbarSelect label="Via: use netclass sizes" width="w-[234px]" />
        <Separator />
        <div className="ml-0.5 flex h-7 w-[199px] shrink-0 items-center gap-1.5 border border-[#8a8a8a] bg-[#1b1b1b] pl-1.5">
          <span className="size-[17px] shrink-0 bg-[#d4d4d0]" />
          <input aria-label="Active layer" defaultValue="Edge.Cuts" className="w-full min-w-0 bg-transparent text-[17px] leading-5" />
        </div>
        <button type="button" aria-label="Choose layer" className="ml-1 flex h-[26px] w-[27px] shrink-0 items-center justify-center rounded-md bg-white">
          <svg viewBox="0 0 12 12" className="size-3" fill="none" stroke="#222" strokeWidth="2"><path d="M2 4l4 4 4-4" /></svg>
        </button>
        <button type="button" aria-label="Layer pair" className="mr-1.5 ml-2 shrink-0">
          <svg viewBox="0 0 32 32" className="size-8">
            <path d="M0 0h32v32H0z" fill="#c23436" />
            <path d="M25 0h7v32H9z" fill="#3f7fce" />
            <path d="M22 0L6 32M25 0L9 32" stroke="#e8e8f0" strokeWidth="1.500" />
          </svg>
        </button>
        <Separator />
        <div className="mr-1 ml-px flex">
          <ToolbarSelect label="0.5000 mm (19.69 mils)" width="w-[261px]" />
        </div>
        <Separator />
        <ToolbarSelect label="Zoom 3.50" width="w-[149px]" />
      </nav>

      <main className="flex min-h-0 flex-1">
        <nav className="flex w-[46px] shrink-0 flex-col items-center overflow-hidden pt-1 pr-0.5">
          <Tools items={SIDE_TOOLS} vertical active={['grid', 'gridOverride', 'millimeters', 'ratsnest', 'zoneFilled', 'layers']} />
        </nav>
        <div className="flex-1 bg-[#000d20] pl-[980px]">
          <svg viewBox="0 0 103 60" className="h-[60px] w-[103px]" stroke="#7d8794"><path d="M52.500 0v60M0 44.500h103" /></svg>
        </div>
        <nav className="flex w-[54px] shrink-0 flex-col items-center pt-1 pr-2.5">
          <ToolButton name="arrowCursor" active vertical />
          <svg viewBox="0 0 30 12" className="mt-1 h-3 w-[30px]" stroke={L} strokeWidth="1.500"><path d="M3 2l6 6M27 2l-6 6" /></svg>
        </nav>
        <EditorPanel />
      </main>

      <ViewerWindow />
    </div>
  );
}
